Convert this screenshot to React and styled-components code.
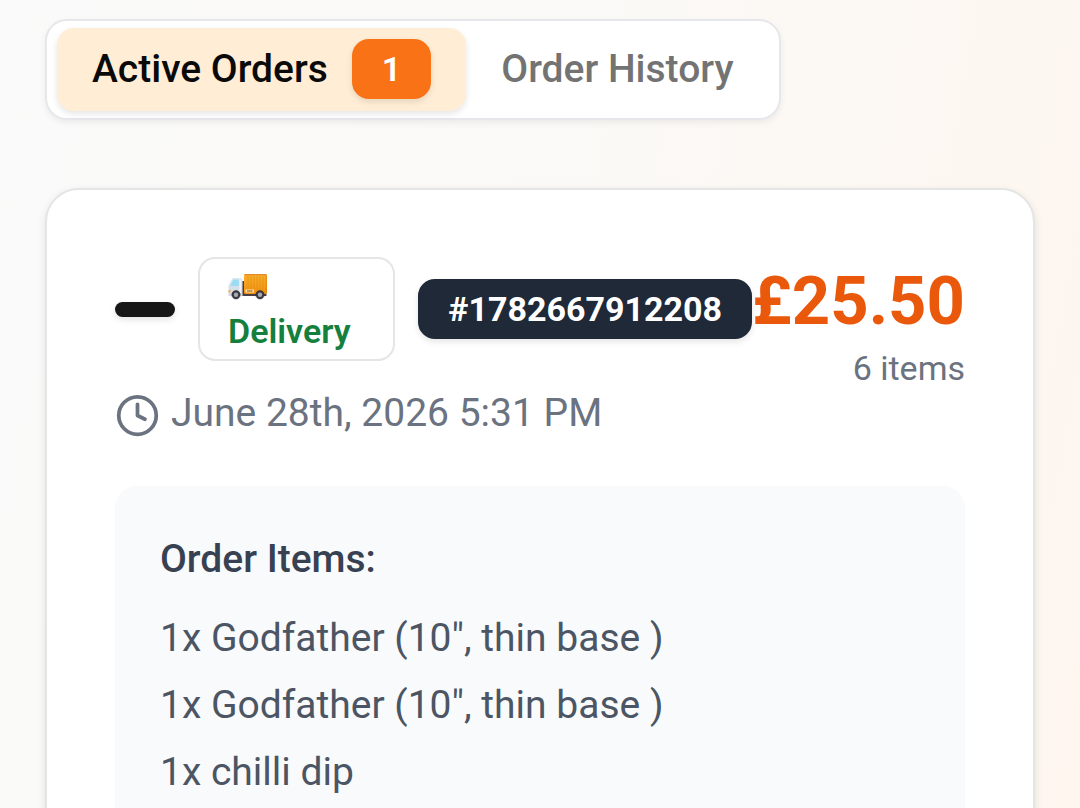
import React from 'react'
import styled, { createGlobalStyle } from 'styled-components'
import { Clock } from 'lucide-react'

const GlobalStyle = createGlobalStyle`
    *, *::before, *::after {
        box-sizing: border-box;
    }
    body {
        margin: 0;
        font-family: Roboto, "Liberation Sans", sans-serif;
        font-size: 39px;
        line-height: 56px;
        color: #0a0a0a;
    }
`
const Page = styled.main`
    height: 100vh;
    padding: 19px 45px 0;
    overflow: hidden;
    background: linear-gradient(100deg, #fafafa 0%, #fbf9f6 55%, #fef6ef 100%);
`
const TabList = styled.div`
    display: inline-flex;
    padding: 7px 10px;
    border: 2px solid #e5e7eb;
    border-radius: 22px;
    background: #fff;
    box-shadow: 0 3px 6px rgba(0, 0, 0, 0.06);
`
const Tab = styled.button`
    display: flex;
    align-items: center;
    gap: 24px;
    padding: 11px 35px 12px;
    border: 0;
    border-radius: 17px;
    background: ${props => (props.$active ? '#ffedd5' : 'transparent')};
    box-shadow: ${props => (props.$active ? '0 3px 6px rgba(0, 0, 0, 0.1)' : 'none')};
    color: ${props => (props.$active ? '#0a0a0a' : '#737373')};
    font: inherit;
    font-weight: 500;
    cursor: pointer;
`
const Badge = styled.span`
    flex: ${props => (props.$grow ? '1 1 0' : 'none')};
    padding: 6px 28px;
    border: 2px solid ${props => props.$border || props.$background};
    border-radius: 17px;
    background: ${props => props.$background || '#fff'};
    box-shadow: ${props => (props.$border ? 'none' : '0 3px 6px rgba(0, 0, 0, 0.1)')};
    color: ${props => props.$color || '#fff'};
    font-size: 34px;
    font-weight: ${props => props.$weight || 600};
    line-height: 44px;
`
const Card = styled.article`
    margin-top: 68px;
    padding: 67px 68px;
    border: 2px solid #e5e5e5;
    border-radius: 34px;
    background: #fff;
    box-shadow: 0 3px 8px rgba(0, 0, 0, 0.1);
`
const CardHeader = styled.header`
    display: flex;
    align-items: flex-start;
    justify-content: space-between;
`
const Summary = styled.div`
    flex: 1;
    display: flex;
    flex-direction: column;
    gap: 24px;
`
const BadgeRow = styled.div`
    display: flex;
    align-items: center;
    gap: 23px;
`
const Status = styled.span`
    flex: none;
    width: 60px;
    height: 15px;
    border-radius: 8px;
    background: #171717;
    box-shadow: 0 3px 6px rgba(0, 0, 0, 0.1);
`
const BadgeLine = styled.span`
    display: flex;
    align-items: center;
    height: 44px;
`
const Placed = styled.div`
    display: flex;
    align-items: center;
    gap: 11px;
    color: #6b7280;

    svg {
        flex: none;
        margin-top: 4px;
    }
`
const Totals = styled.div`
    text-align: right;
`
const Price = styled.div`
    color: #ea580c;
    font-size: 67px;
    font-weight: 700;
    line-height: 88px;
`
const Count = styled.div`
    color: #6b7280;
    font-size: 34px;
    line-height: 46px;
`
const Items = styled.section`
    margin-top: 45px;
    padding: 45px;
    border-radius: 22px;
    background: #f9fafb;
`
const ItemsTitle = styled.h2`
    margin: 0 0 23px;
    color: #374151;
    font-size: 39px;
    font-weight: 500;
`
const ItemList = styled.ul`
    display: flex;
    flex-direction: column;
    gap: 11px;
    margin: 0;
    padding: 0;
    list-style: none;
    color: #4b5563;
`

const items = [
    '1x Godfather (10", thin base )',
    '1x Godfather (10", thin base )',
    '1x chilli dip',
]

const Truck = () => (
    <svg width="40" height="28" viewBox="0 0 40 28" aria-hidden="true">
        <defs>
            <linearGradient id="cargo" x1="0" y1="0" x2="0" y2="1">
                <stop offset="0" stopColor="#fbb02b" />
                <stop offset="1" stopColor="#f0900f" />
            </linearGradient>
            <linearGradient id="cab" x1="0" y1="0" x2="0" y2="1">
                <stop offset="0" stopColor="#dce9f0" />
                <stop offset="1" stopColor="#d3d7e2" />
            </linearGradient>
        </defs>
        <path d="M14 8h3v13h-3z" fill="#4b3c42" />
        <path d="M12 20.500h26.500v2.500H12z" fill="#4a4146" />
        <path d="M5.500 5H13q1.500 0 1.500 1.500V23H1.500q-1 0-1-1v-8q0-1.500.7-3L4 6.300Q4.500 5 5.500 5z" fill="url(#cab)" />
        <path d="M5.500 6.500H10q.8 0 .8.800V13H2.500L4.800 7.500q.2-1 .7-1z" fill="#9adcf3" />
        <path d="M11.500 6.500h1.500V20h-1.500z" fill="#f2f5f8" />
        <path d="M.5 17h2v2.500h-2z" fill="#f0b24a" />
        <rect x="16" y="1" width="23" height="20" rx="1.500" fill="url(#cargo)" />
        <path d="M16.500 1.700h22" stroke="#d9822b" strokeWidth="1" />
        <path d="M20 3v13M23 3v13M26 3v13M29 3v17M32 3v14M35 3v17" stroke="#e08d14" strokeWidth=".7" />
        <path d="M38.200 2v18" stroke="#d37d14" strokeWidth=".8" />
        <path d="M17.500 16.500h8.500v3h-8.500z" fill="#ffe0a6" />
        <path d="M19 18h5.500" stroke="#8c4a12" strokeWidth="1" />
        <g fill="#3d3a41" stroke="#25242a" strokeWidth=".5">
            <circle cx="8" cy="21.800" r="4.200" />
            <circle cx="32" cy="21.800" r="4.200" />
        </g>
        <g fill="#a9a9b2">
            <circle cx="8" cy="21.800" r="2.200" />
            <circle cx="32" cy="21.800" r="2.200" />
        </g>
    </svg>
)

const App = () => (
    <Page>
        <GlobalStyle />
        <TabList role="tablist">
            <Tab role="tab" aria-selected="true" $active>
                Active Orders
                <Badge $background="#f97316">1</Badge>
            </Tab>
            <Tab role="tab" aria-selected="false">
                Order History
            </Tab>
        </TabList>
        <Card>
            <CardHeader>
                <Summary>
                    <BadgeRow>
                        <Status />
                        <Badge $grow $border="#e5e5e5" $color="#15803d">
                            <BadgeLine><Truck /></BadgeLine>
                            <BadgeLine>Delivery</BadgeLine>
                        </Badge>
                        <Badge $background="#1f2937" $weight={700}>#1782667912208</Badge>
                    </BadgeRow>
                    <Placed>
                        <Clock size={45} strokeWidth={2} />
                        <time dateTime="2026-06-28T17:31">June 28th, 2026 5:31 PM</time>
                    </Placed>
                </Summary>
                <Totals>
                    <Price>£25.50</Price>
                    <Count>6 items</Count>
                </Totals>
            </CardHeader>
            <Items>
                <ItemsTitle>Order Items:</ItemsTitle>
                <ItemList>
                    {items.map((item, index) => (
                        <li key={index}>{item}</li>
                    ))}
                </ItemList>
            </Items>
        </Card>
    </Page>
)

export default App
